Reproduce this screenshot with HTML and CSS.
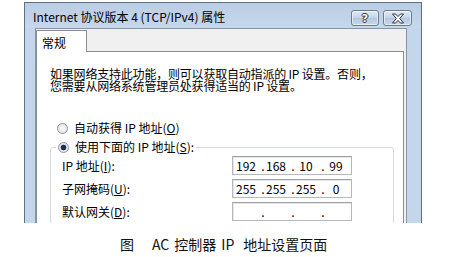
FILE: index.html
```html
<!DOCTYPE html>
<html lang="zh-CN">
<head>
<meta charset="utf-8">
<link rel="stylesheet" href="styles.css">
</head>
<body>
<div class="window">
  <div class="titlebar">
    <span class="title">Internet 协议版本 4 (TCP/IPv4) 属性</span>
    <div class="tbtns">
      <span class="tbtn help">?</span>
      <span class="tbtn close">
        <svg width="14" height="11" viewBox="0 0 14 11"><path d="M1.5 1h3l2.5 2.6L9.5 1h3L8.7 5.5l3.8 4.5h-3L7 7.4 4.5 10h-3l3.8-4.5z" fill="#fff" stroke="#2a2f3a" stroke-width="1" stroke-linejoin="round"/></svg>
      </span>
    </div>
  </div>
  <div class="frame-body">
    <div class="client">
      <div class="tabs"><div class="tab">常规</div></div>
      <div class="panel">
        <p class="intro">如果网络支持此功能，则可以获取自动指派的 IP 设置。否则，<br>您需要从网络系统管理员处获得适当的 IP 设置。</p>
        <div class="radio-row"><span class="radio"></span><span>自动获得 IP 地址(<u>O</u>)</span></div>
        <div class="group">
          <div class="legend"><span class="radio checked"></span><span>使用下面的 IP 地址(<u>S</u>):</span></div>
          <div class="field-row">
            <span class="label">IP 地址(<u>I</u>):</span>
            <div class="ipbox"><span>192</span><i>.</i><span>168</span><i>.</i><span>10</span><i>.</i><span>99</span></div>
          </div>
          <div class="field-row">
            <span class="label">子网掩码(<u>U</u>):</span>
            <div class="ipbox"><span>255</span><i>.</i><span>255</span><i>.</i><span>255</span><i>.</i><span>0</span></div>
          </div>
          <div class="field-row">
            <span class="label">默认网关(<u>D</u>):</span>
            <div class="ipbox"><span></span><i>.</i><span></span><i>.</i><span></span><i>.</i><span></span></div>
          </div>
        </div>
      </div>
    </div>
  </div>
</div>
<div class="caption"><span class="c1">图</span><span class="c2">AC</span><span class="c3">控制器</span><span class="c4">IP</span><span>地址设置页面</span></div>
</body>
</html>
```
FILE: styles.css
```css
* { box-sizing: border-box; }
html, body { margin: 0; padding: 0; background: #fff; }
body {
  width: 475px;
  height: 257px;
  overflow: hidden;
  font-family: "Noto Sans CJK SC", "DejaVu Sans", sans-serif;
  font-size: 12px;
  color: #000;
}
.window {
  margin: 2px 0 0 24px;
  width: 398px;
  height: 221px;
  border: 1px solid #5f6f84;
  border-bottom: none;
  background: #c4d6ea;
  display: flex;
  flex-direction: column;
  overflow: hidden;
}
.titlebar {
  height: 25px;
  flex: none;
  display: flex;
  justify-content: space-between;
  align-items: flex-start;
  padding: 0 9px 0 8px;
  background: linear-gradient(#b9cde4, #c7d8eb);
}
.title {
  margin-top: 6px;
  font-size: 12px;
  line-height: 16px;
  color: #000;
}
.tbtns { display: flex; gap: 4px; margin-top: 7px; }
.tbtn {
  height: 16px;
  border: 1px solid #6a7c94;
  border-radius: 3px;
  background: linear-gradient(#e2eaf4, #c2d3e7 50%, #b3c7df 51%, #c6d7ea);
  display: flex;
  align-items: center;
  justify-content: center;
  box-shadow: inset 0 0 0 1px rgba(255,255,255,0.55);
}
.help {
  width: 28px;
  font-family: "DejaVu Sans", sans-serif;
  font-weight: bold;
  font-size: 11px;
  color: #fff;
  text-shadow: 1px 0 #2a2f3a, -1px 0 #2a2f3a, 0 1px #2a2f3a, 0 -1px #2a2f3a;
}
.close { width: 29px; }
.frame-body {
  flex: 1;
  display: flex;
  padding: 0 14px 0 10px;
  min-height: 0;
}
.client {
  flex: 1;
  background: #f0f0f0;
  border: 1px solid #8596ab;
  border-bottom: none;
  padding: 1px 2px 0 0;
  display: flex;
  flex-direction: column;
  min-height: 0;
}
.tabs { display: flex; flex: none; }
.tab {
  position: relative;
  z-index: 1;
  width: 51px;
  height: 22px;
  margin-bottom: -1px;
  background: #fff;
  border: 1px solid #898c95;
  border-bottom: none;
  padding: 4px 0 0 5px;
  line-height: 16px;
  font-size: 12px;
}
.panel {
  flex: 1;
  background: #fff;
  border: 1px solid #898c95;
  border-bottom: none;
  padding: 16px 0 0 13px;
}
.intro {
  margin: 0;
  line-height: 12px;
  font-size: 12px;
  letter-spacing: -0.2px;
  white-space: nowrap;
}
.radio-row {
  display: flex;
  align-items: center;
  height: 14px;
  margin: 29px 0 0 7px;
  line-height: 14px;
}
.radio {
  width: 11px;
  height: 11px;
  border-radius: 50%;
  border: 1px solid #8c96a6;
  background: radial-gradient(circle, #f4f4f4 30%, #d4d8de 100%);
  margin-right: 6px;
  flex: none;
}
.radio.checked {
  background: radial-gradient(circle, #1c2f4c 0, #1c2f4c 2.5px, #e8ecf1 3.2px, #d4d8de 100%);
}
.group {
  margin: 12px 0 0 0;
  width: 344px;
  border: 1px solid #d5dadf;
  border-radius: 3px;
  padding: 0 0 8px 11px;
}
.legend {
  display: flex;
  width: max-content;
  align-items: center;
  height: 14px;
  line-height: 14px;
  margin: -8px 0 0 -6px;
  padding: 0 2px;
  background: #fff;
}
.field-row {
  display: flex;
  align-items: center;
  margin-top: 4px;
  height: 19px;
}
.legend + .field-row { margin-top: 2px; }
.label {
  width: 170px;
  flex: none;
  line-height: 14px;
}
.ipbox {
  width: 120px;
  height: 19px;
  border: 1px solid #b5b8bd;
  border-top-color: #9ea2a8;
  box-shadow: inset 1px 1px 0 #e4e6e9;
  background: #fff;
  padding-left: 3px;
  display: grid;
  grid-template-columns: 24px 6px 24px 6px 24px 6px 24px;
  align-items: center;
  line-height: 16px;
  font-size: 12px;
}
.ipbox span { text-align: center; transform: translateX(-2px); }
.ipbox i { font-style: normal; text-align: center; }
.caption {
  margin-top: 11px;
  padding-left: 120px;
  display: flex;
  font-size: 14px;
  line-height: 20px;
  color: #111;
}
.c1 { margin-right: 18px; }
.c2 { margin-right: 5px; }
.c3 { margin-right: 5px; }
.c4 { margin-right: 9px; }
```
